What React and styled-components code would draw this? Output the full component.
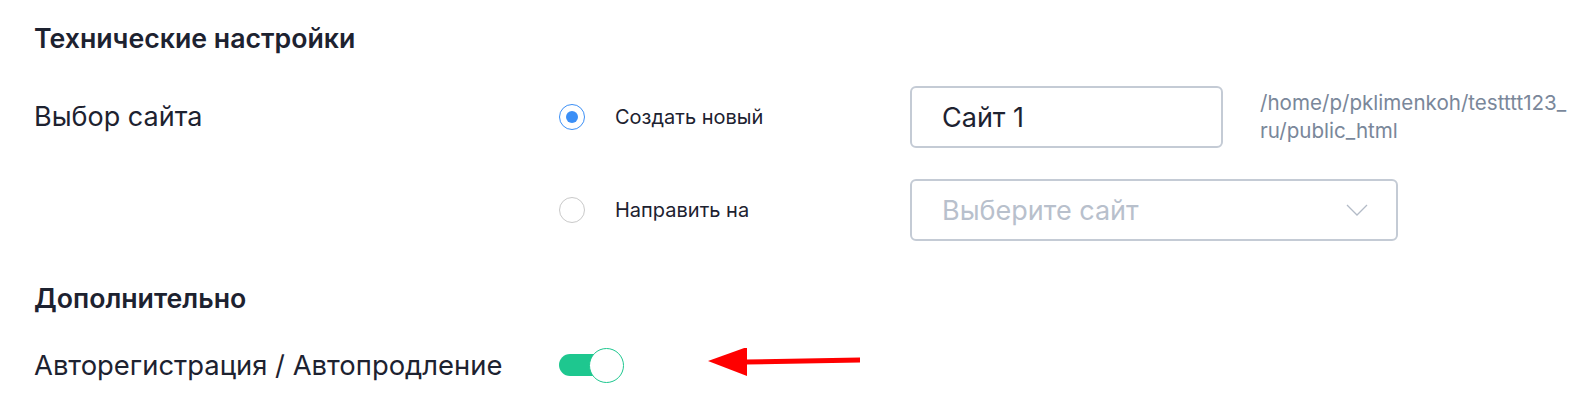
import React from 'react';
import styled, { createGlobalStyle } from 'styled-components';

const GlobalStyle = createGlobalStyle`
  html, body {
    margin: 0;
    padding: 0;
    background: #ffffff;
  }
  body {
    font-family: Inter, "Noto Sans", sans-serif;
    color: #1d2230;
  }
`;

const Page = styled.div`
  padding: 23px 0 0 34px;
  width: 1547px;
  height: 386px;
  overflow: hidden;
`;

const SectionTitle = styled.h3`
  margin: 0;
  height: 30px;
  line-height: 30px;
  font-size: 26.7px;
  font-weight: 600;
  color: #1d2230;
  white-space: nowrap;
  margin-top: ${(p) => p.$top || 0}px;
`;

const Row = styled.div`
  display: flex;
  align-items: flex-start;
  margin-top: ${(p) => p.$top || 0}px;
`;

const Label = styled.div`
  width: 525px;
  flex-shrink: 0;
  font-size: ${(p) => p.$size || 27}px;
  line-height: ${(p) => p.$h || 62}px;
  color: #1d2230;
  white-space: nowrap;
`;

const Options = styled.div`
  display: flex;
  flex-direction: column;
  gap: 31px;
`;

const Option = styled.div`
  display: flex;
  align-items: center;
  height: 62px;
`;

const RadioLabel = styled.label`
  display: flex;
  align-items: center;
  width: 351px;
  flex-shrink: 0;
  font-size: 20px;
  color: #1d2230;
  cursor: pointer;
  white-space: nowrap;
`;

const Radio = styled.span`
  width: 26px;
  height: 26px;
  box-sizing: border-box;
  border-radius: 50%;
  border: 1px solid ${(p) => (p.$checked ? '#3b8ff6' : '#c9c9c9')};
  display: flex;
  align-items: center;
  justify-content: center;
  margin-right: 30px;

  &::after {
    content: '';
    width: 12px;
    height: 12px;
    border-radius: 50%;
    background: ${(p) => (p.$checked ? '#3b8ff6' : 'transparent')};
  }
`;

const Field = styled.div`
  box-sizing: border-box;
  width: ${(p) => p.$w}px;
  height: 62px;
  border: 2px solid #c4cbd5;
  border-radius: 6px;
  padding: 0 28px 0 30px;
  display: flex;
  align-items: center;
  justify-content: space-between;
  font-size: 27px;
  white-space: nowrap;
  color: ${(p) => (p.$placeholder ? '#b8c0cc' : '#1d2230')};
`;

const Note = styled.div`
  margin-left: 37px;
  font-size: 20.6px;
  line-height: 28px;
  color: #7a879a;
  white-space: nowrap;
`;

const Toggle = styled.span`
  position: relative;
  display: inline-block;
  width: 65px;
  height: 34px;

  &::before {
    content: '';
    position: absolute;
    left: 0;
    top: 6px;
    width: 56px;
    height: 22px;
    border-radius: 11px;
    background: #1ec78f;
  }

  &::after {
    content: '';
    position: absolute;
    right: 0;
    top: 0;
    width: 35px;
    height: 35px;
    box-sizing: border-box;
    border-radius: 50%;
    border: 1px solid #1ec78f;
    background: #ffffff;
  }
`;

const ToggleCell = styled.div`
  display: flex;
  align-items: center;
  height: 34px;
`;

const Arrow = styled.svg`
  margin-left: 82px;
  display: block;
`;

const Chevron = () => (
  <svg width="22" height="12" viewBox="0 0 22 12" fill="none">
    <path d="M1 1l10 10L21 1" stroke="#b3bbc7" strokeWidth="1.3" />
  </svg>
);

export default function App() {
  return (
    <>
      <GlobalStyle />
      <Page>
        <SectionTitle>Технические настройки</SectionTitle>
        <Row $top={33}>
          <Label>Выбор сайта</Label>
          <Options>
            <Option>
              <RadioLabel>
                <Radio $checked />
                Создать новый
              </RadioLabel>
              <Field $w={313}>Сайт 1</Field>
              <Note>
                /home/p/pklimenkoh/testttt123_
                <br />
                ru/public_html
              </Note>
            </Option>
            <Option>
              <RadioLabel>
                <Radio />
                Направить на
              </RadioLabel>
              <Field $w={488} $placeholder>
                Выберите сайт
                <Chevron />
              </Field>
            </Option>
          </Options>
        </Row>
        <SectionTitle $top={42}>Дополнительно</SectionTitle>
        <Row $top={35}>
          <Label $h={34} $size={27.4}>Авторегистрация / Автопродление</Label>
          <ToggleCell>
            <Toggle />
            <Arrow width="156" height="34" viewBox="0 0 156 34">
              <path d="M40 11.5L154 9.5L154 14.5L40 16.5Z" fill="#ff0000" />
              <path d="M2 13L41 -1L41 28Z" fill="#ff0000" />
            </Arrow>
          </ToggleCell>
        </Row>
      </Page>
    </>
  );
}
